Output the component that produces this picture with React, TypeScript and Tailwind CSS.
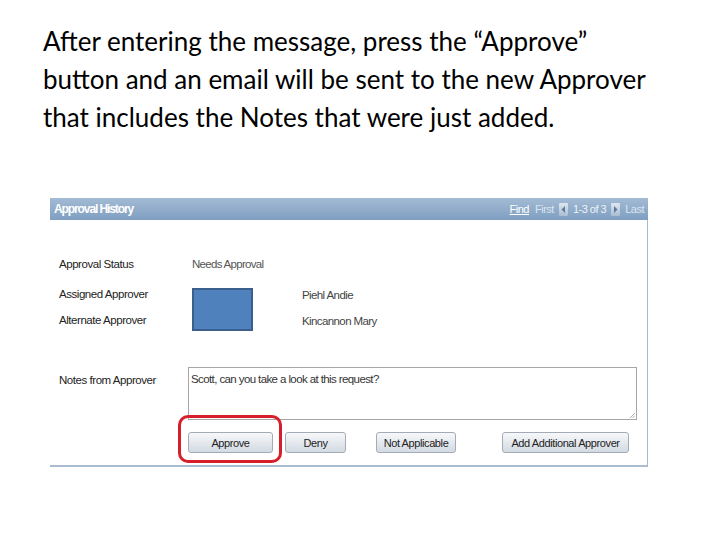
import React from "react";

const ui = { fontFamily: '"Liberation Sans", Arial, sans-serif' };

function Arrow({ dir }: { dir: "l" | "r" }) {
  return (
    <span className="inline-flex h-[13px] w-[9px] items-center justify-center rounded-[1px] bg-gradient-to-b from-[#dfe7f0] to-[#a9bdd2]">
      <svg width="5" height="7" viewBox="0 0 5 7">
        {dir === "l" ? (
          <polygon points="4,0 4,7 0.5,3.5" fill="#5c7a9c" />
        ) : (
          <polygon points="1,0 1,7 4.5,3.5" fill="#5c7a9c" />
        )}
      </svg>
    </span>
  );
}

function Btn({ label, w }: { label: string; w: string }) {
  return (
    <div
      className={`flex h-[21px] ${w} items-center justify-center rounded-[3px] border border-[#a3acb6] bg-gradient-to-b from-[#f7f8fa] to-[#d3dae2] text-[11px] tracking-[-0.4px] text-[#222]`}
    >
      {label}
    </div>
  );
}

export default function App() {
  return (
    <div className="h-[540px] w-[720px] bg-white">
      <div
        className="pl-[43px] pt-[22px] text-[26px] leading-[38px] text-black"
        style={{ fontFamily: 'Lato, "Open Sans", sans-serif' }}
      >
        <p>After entering the message, press the “Approve”</p>
        <p>button and an email will be sent to the new Approver</p>
        <p>that includes the Notes that were just added.</p>
      </div>

      <div className="ml-[50px] mt-[62px] w-[598px]" style={ui}>
        {/* header */}
        <div className="flex h-[22px] items-center bg-gradient-to-b from-[#a3bbd4] to-[#7f9ec1] pl-[4px] pr-[4px]">
          <span className="text-[12px] font-bold tracking-[-1.1px] text-white">Approval History</span>
          <div className="ml-auto flex items-center text-[11px] tracking-[-0.5px]">
            <span className="text-white underline">Find</span>
            <span className="ml-[6px] text-[#dbe4ee]">First</span>
            <span className="ml-[5px]"><Arrow dir="l" /></span>
            <span className="ml-[5px] text-[#eef3f8]">1-3 of 3</span>
            <span className="ml-[5px]"><Arrow dir="r" /></span>
            <span className="ml-[5px] text-[#dbe4ee]">Last</span>
          </div>
        </div>
        {/* body */}
        <div className="border-b-2 border-r border-b-[#aabdd0] border-r-[#a8bacc] pb-[12px] pl-[9px] pt-[37px] text-[11.5px] tracking-[-0.45px] leading-[14px]">
          <div className="flex">
            <div className="w-[133px] text-[#222]">Approval Status</div>
            <div className="text-[#555] tracking-[-0.7px]">Needs Approval</div>
          </div>

          <div className="mt-[16px] flex">
            <div className="flex w-[133px] flex-col gap-[12px] text-[#222]">
              <div>Assigned Approver</div>
              <div>Alternate Approver</div>
            </div>
            <div className="mt-[1px] h-[43px] w-[61px] border-2 border-[#3a5f8c] bg-[#4f81bd]" />
            <div className="ml-[49px] flex flex-col gap-[12px] pt-[1px] text-[#444] tracking-[-0.6px]">
              <div>Piehl Andie</div>
              <div>Kincannon Mary</div>
            </div>
          </div>

          <div className="mt-[36px] flex">
            <div className="w-[129px] pt-[6px] text-[#222]">Notes from Approver</div>
            <div className="relative h-[53px] w-[449px] border border-[#a6a6a6] px-[2px] pt-[4px] text-[11.5px] tracking-[-0.6px] text-[#333]">
              Scott, can you take a look at this request?
              <svg className="absolute bottom-[1px] right-[1px]" width="6" height="6" viewBox="0 0 6 6">
                <line x1="1" y1="6" x2="6" y2="1" stroke="#999" strokeWidth="0.8" />
                <line x1="3.5" y1="6" x2="6" y2="3.5" stroke="#999" strokeWidth="0.8" />
              </svg>
            </div>
          </div>

          <div className="mt-[12px] flex pl-[129px]">
            <div className="relative">
              <Btn label="Approve" w="w-[85px]" />
              <div className="pointer-events-none absolute bottom-[-10px] left-[-10px] right-[-9px] top-[-17px] rounded-[10px] border-[3.5px] border-[#d71f2b]" />
            </div>
            <div className="ml-[12px]"><Btn label="Deny" w="w-[61px]" /></div>
            <div className="ml-[30px]"><Btn label="Not Applicable" w="w-[80px]" /></div>
            <div className="ml-[46px]"><Btn label="Add Additional Approver" w="w-[127px]" /></div>
          </div>
        </div>
      </div>
    </div>
  );
}
